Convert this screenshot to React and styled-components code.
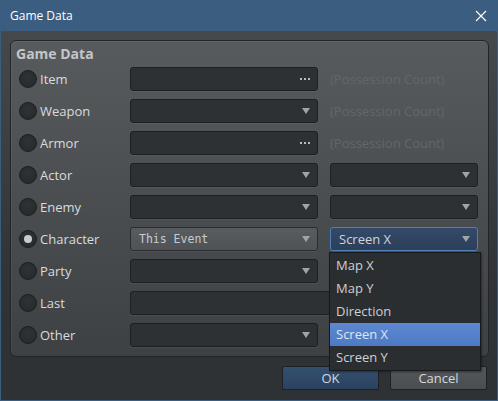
import React from 'react';
import styled, { createGlobalStyle, css } from 'styled-components';

const GlobalStyle = createGlobalStyle`
  html, body {
    margin: 0;
    padding: 0;
    background: #2f3235;
  }
  * {
    box-sizing: border-box;
  }
`;

const Window = styled.div`
  width: 498px;
  height: 401px;
  display: flex;
  flex-direction: column;
  border: 1px solid #3b5d80;
  border-top: none;
  font-family: 'Open Sans', 'Noto Sans', sans-serif;
  overflow: hidden;
`;

const TitleBar = styled.div`
  height: 31px;
  flex: none;
  background: #3b5d80;
  display: flex;
  align-items: center;
  justify-content: space-between;
  padding: 0 8px 0 9px;
  color: #ffffff;
  font-size: 12px;
`;

const CloseButton = styled.svg`
  width: 12px;
  height: 12px;
  margin-right: 2px;
`;

const Body = styled.div`
  flex: 1;
  display: flex;
  flex-direction: column;
  padding: 9px 8px 0 9px;
  background: linear-gradient(#46494c, #303336 70%, #2f3235);
`;

const GroupBox = styled.div`
  height: 317px;
  border: 1px solid #222426;
  border-radius: 6px;
  background: linear-gradient(#585b5e, #3e4144);
  padding: 4px 8px 0 8px;
  box-shadow: inset 1px 1px 0 rgba(255, 255, 255, 0.06);
`;

const GroupTitle = styled.div`
  font-size: 14px;
  font-weight: 700;
  color: #c4c6c8;
  height: 18px;
  line-height: 18px;
  margin-left: -3px;
  margin-bottom: 4px;
`;

const Rows = styled.div`
  display: flex;
  flex-direction: column;
  gap: 8px;
`;

const Row = styled.div`
  display: flex;
  align-items: center;
  height: 24px;
`;

const Radio = styled.span`
  width: 18px;
  height: 18px;
  border-radius: 50%;
  flex: none;
  background: radial-gradient(circle at 50% 40%, #303336, #25282a);
  border: 1px solid #1c1e20;
  display: flex;
  align-items: center;
  justify-content: center;
  &::after {
    content: '';
    width: 8px;
    height: 8px;
    border-radius: 50%;
    background: #c9cbcc;
    display: ${p => (p.checked ? 'block' : 'none')};
  }
`;

const Label = styled.span`
  width: 93px;
  flex: none;
  padding-left: 3px;
  font-size: 13px;
  color: #d9dbdd;
  white-space: nowrap;
`;

const Field = styled.div`
  position: relative;
  width: ${p => p.width}px;
  height: 24px;
  flex: none;
  display: flex;
  align-items: center;
  justify-content: space-between;
  padding: 0 6px 0 8px;
  border-radius: 3px;
  border: 1px solid #1d1f21;
  background: #2e3134;
  box-shadow: 0 1px 0 rgba(255, 255, 255, 0.05);
  color: #d0d4d8;
  font-size: 13px;
  ${p =>
    p.variant === 'light' &&
    css`
      background: linear-gradient(#585c5f, #4f5356);
      border-color: #2a2d2f;
    `}
  ${p =>
    p.variant === 'active' &&
    css`
      background: linear-gradient(#34496a, #2c3f5a);
      border-color: #4f7fb4;
    `}
`;

const MonoText = styled.span`
  font-family: 'DejaVu Sans Mono', 'Liberation Mono', monospace;
  font-size: 11.5px;
  color: #c6ccd2;
`;

const Spacer = styled.span`
  width: 12px;
  flex: none;
`;

const Hint = styled.span`
  font-size: 13px;
  color: #636669;
  white-space: nowrap;
`;

const Arrow = styled.span`
  width: 0;
  height: 0;
  margin-left: auto;
  border-left: 4px solid transparent;
  border-right: 4px solid transparent;
  border-top: 6px solid #9fa4a9;
  margin-right: 1px;
`;

const Dots = styled.span`
  margin-left: auto;
  display: flex;
  gap: 2px;
  margin-right: 1px;
  span {
    width: 2px;
    height: 2px;
    background: #b8bcc0;
  }
`;

const Menu = styled.div`
  position: absolute;
  top: 24px;
  left: -2px;
  width: 152px;
  padding: 1px 0;
  background: #2b2e31;
  border: 1px solid #18191b;
  box-shadow: 1px 1px 2px rgba(0, 0, 0, 0.4);
  z-index: 5;
`;

const MenuItem = styled.div`
  height: 23px;
  line-height: 23px;
  padding-left: 6px;
  font-size: 13px;
  color: #ccd0d4;
  ${p =>
    p.selected &&
    css`
      background: linear-gradient(#5c88d2, #4e79c3);
      color: #dfe6f0;
    `}
`;

const ButtonRow = styled.div`
  display: flex;
  justify-content: flex-end;
  gap: 11px;
  margin-top: 9px;
  padding-right: 2px;
`;

const Button = styled.div`
  width: 97px;
  height: 24px;
  border-radius: 2px;
  display: flex;
  align-items: center;
  justify-content: center;
  font-size: 13px;
  color: #d4d8dc;
  border: 1px solid #1e2022;
  background: ${p =>
    p.primary ? 'linear-gradient(#34506f, #2b4260)' : 'linear-gradient(#53575a, #4a4e51)'};
`;

const Combo = ({ width, variant, children, menu }) => (
  <Field width={width} variant={variant}>
    {children}
    <Arrow />
    {menu}
  </Field>
);

const Picker = ({ width }) => (
  <Field width={width}>
    <Dots>
      <span />
      <span />
      <span />
    </Dots>
  </Field>
);

const options = ['Map X', 'Map Y', 'Direction', 'Screen X', 'Screen Y'];

const rows = [
  { label: 'Item', main: 'picker', hint: true },
  { label: 'Weapon', main: 'combo', hint: true },
  { label: 'Armor', main: 'picker', hint: true },
  { label: 'Actor', main: 'combo', extra: true },
  { label: 'Enemy', main: 'combo', extra: true },
  { label: 'Character', main: 'combo', extra: true, checked: true },
  { label: 'Party', main: 'combo' },
  { label: 'Last', main: 'wide' },
  { label: 'Other', main: 'combo' },
];

export default function App() {
  return (
    <>
      <GlobalStyle />
      <Window>
        <TitleBar>
          <span>Game Data</span>
          <CloseButton viewBox="0 0 12 12">
            <path d="M1 1 L11 11 M11 1 L1 11" stroke="#ffffff" strokeWidth="1.2" />
          </CloseButton>
        </TitleBar>
        <Body>
          <GroupBox>
            <GroupTitle>Game Data</GroupTitle>
            <Rows>
              {rows.map(r => (
                <Row key={r.label}>
                  <Radio checked={r.checked} />
                  <Label>{r.label}</Label>
                  {r.main === 'picker' && <Picker width={188} />}
                  {r.main === 'wide' && <Field width={348} />}
                  {r.main === 'combo' && (
                    <Combo width={188} variant={r.checked ? 'light' : undefined}>
                      {r.checked && <MonoText>This Event</MonoText>}
                    </Combo>
                  )}
                  <Spacer />
                  {r.hint && <Hint>(Possession Count)</Hint>}
                  {r.extra && (
                    <Combo
                      width={148}
                      variant={r.checked ? 'active' : undefined}
                      menu={
                        r.checked && (
                          <Menu>
                            {options.map(o => (
                              <MenuItem key={o} selected={o === 'Screen X'}>
                                {o}
                              </MenuItem>
                            ))}
                          </Menu>
                        )
                      }
                    >
                      {r.checked && 'Screen X'}
                    </Combo>
                  )}
                </Row>
              ))}
            </Rows>
          </GroupBox>
          <ButtonRow>
            <Button primary>OK</Button>
            <Button>Cancel</Button>
          </ButtonRow>
        </Body>
      </Window>
    </>
  );
}
